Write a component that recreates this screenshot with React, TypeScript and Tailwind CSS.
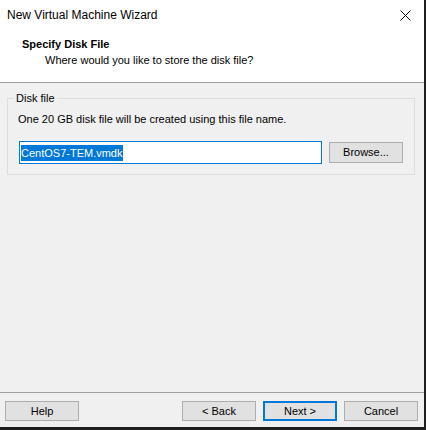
import React from "react";

const font = { fontFamily: '"Liberation Sans", Arial, sans-serif' };

function Btn({ label, primary }: { label: string; primary?: boolean }) {
  return (
    <div
      className={
        "w-[74px] h-[20px] flex items-center justify-center bg-[#e1e1e1] text-[11px] text-black " +
        (primary ? "border-2 border-[#0078d7]" : "border border-[#adadad]")
      }
    >
      {label}
    </div>
  );
}

export default function App() {
  return (
    <div className="w-[426px] h-[430px] bg-[#1f1f1f]" style={font}>
      <div className="w-[424px] h-[427px] flex flex-col bg-[#f0f0f0] text-black">
        <div className="bg-white h-[82px] flex flex-col">
          <div className="h-[30px] flex items-center justify-between pl-[7px] pr-[13px]">
            <span className="text-[12px] leading-none">New Virtual Machine Wizard</span>
            <svg width="11" height="11" viewBox="0 0 11 11">
              <path d="M0.5 0.5 L10.5 10.5 M10.5 0.5 L0.5 10.5" stroke="#000" strokeWidth="1" fill="none" />
            </svg>
          </div>
          <div className="pl-[22px] pt-[7px]">
            <div className="text-[11px] font-bold leading-[15px]">Specify Disk File</div>
            <div className="text-[11px] leading-[16px] pl-[23px]">Where would you like to store the disk file?</div>
          </div>
        </div>
        <div className="h-px bg-[#a0a0a0]" />
        <div className="flex-1 flex flex-col">
          <div className="pt-[15px] pl-[7px]">
            <div className="relative w-[408px] h-[77px] border border-[#dcdcdc]">
              <span className="absolute left-[6px] top-[-8px] px-[2px] bg-[#f0f0f0] text-[11px] leading-[14px]">Disk file</span>
              <div className="pl-[10px] pt-[13px] text-[11px] leading-[14px]">One 20 GB disk file will be created using this file name.</div>
              <div className="flex items-center pl-[11px] pt-[15px] gap-[7px]">
                <div className="w-[303px] h-[23px] border border-[#0078d7] bg-white flex items-center pl-[1px]">
                  <span className="bg-[#0078d7] text-white text-[11px] leading-[16px] pr-[1px]">CentOS7-TEM.vmdk</span>
                </div>
                <div className="w-[74px] h-[21px] flex items-center justify-center bg-[#e1e1e1] border border-[#adadad] text-[11px]">Browse...</div>
              </div>
            </div>
          </div>
          <div className="flex-1" />
          <div className="h-px bg-[#a0a0a0]" />
          <div className="h-[34px] flex items-start pt-[8px] pl-[5px] pr-[6px]">
            <Btn label="Help" />
            <div className="flex-1" />
            <div className="flex gap-[7px]">
              <Btn label="< Back" />
              <Btn label="Next >" primary />
              <Btn label="Cancel" />
            </div>
          </div>
        </div>
      </div>
    </div>
  );
}
